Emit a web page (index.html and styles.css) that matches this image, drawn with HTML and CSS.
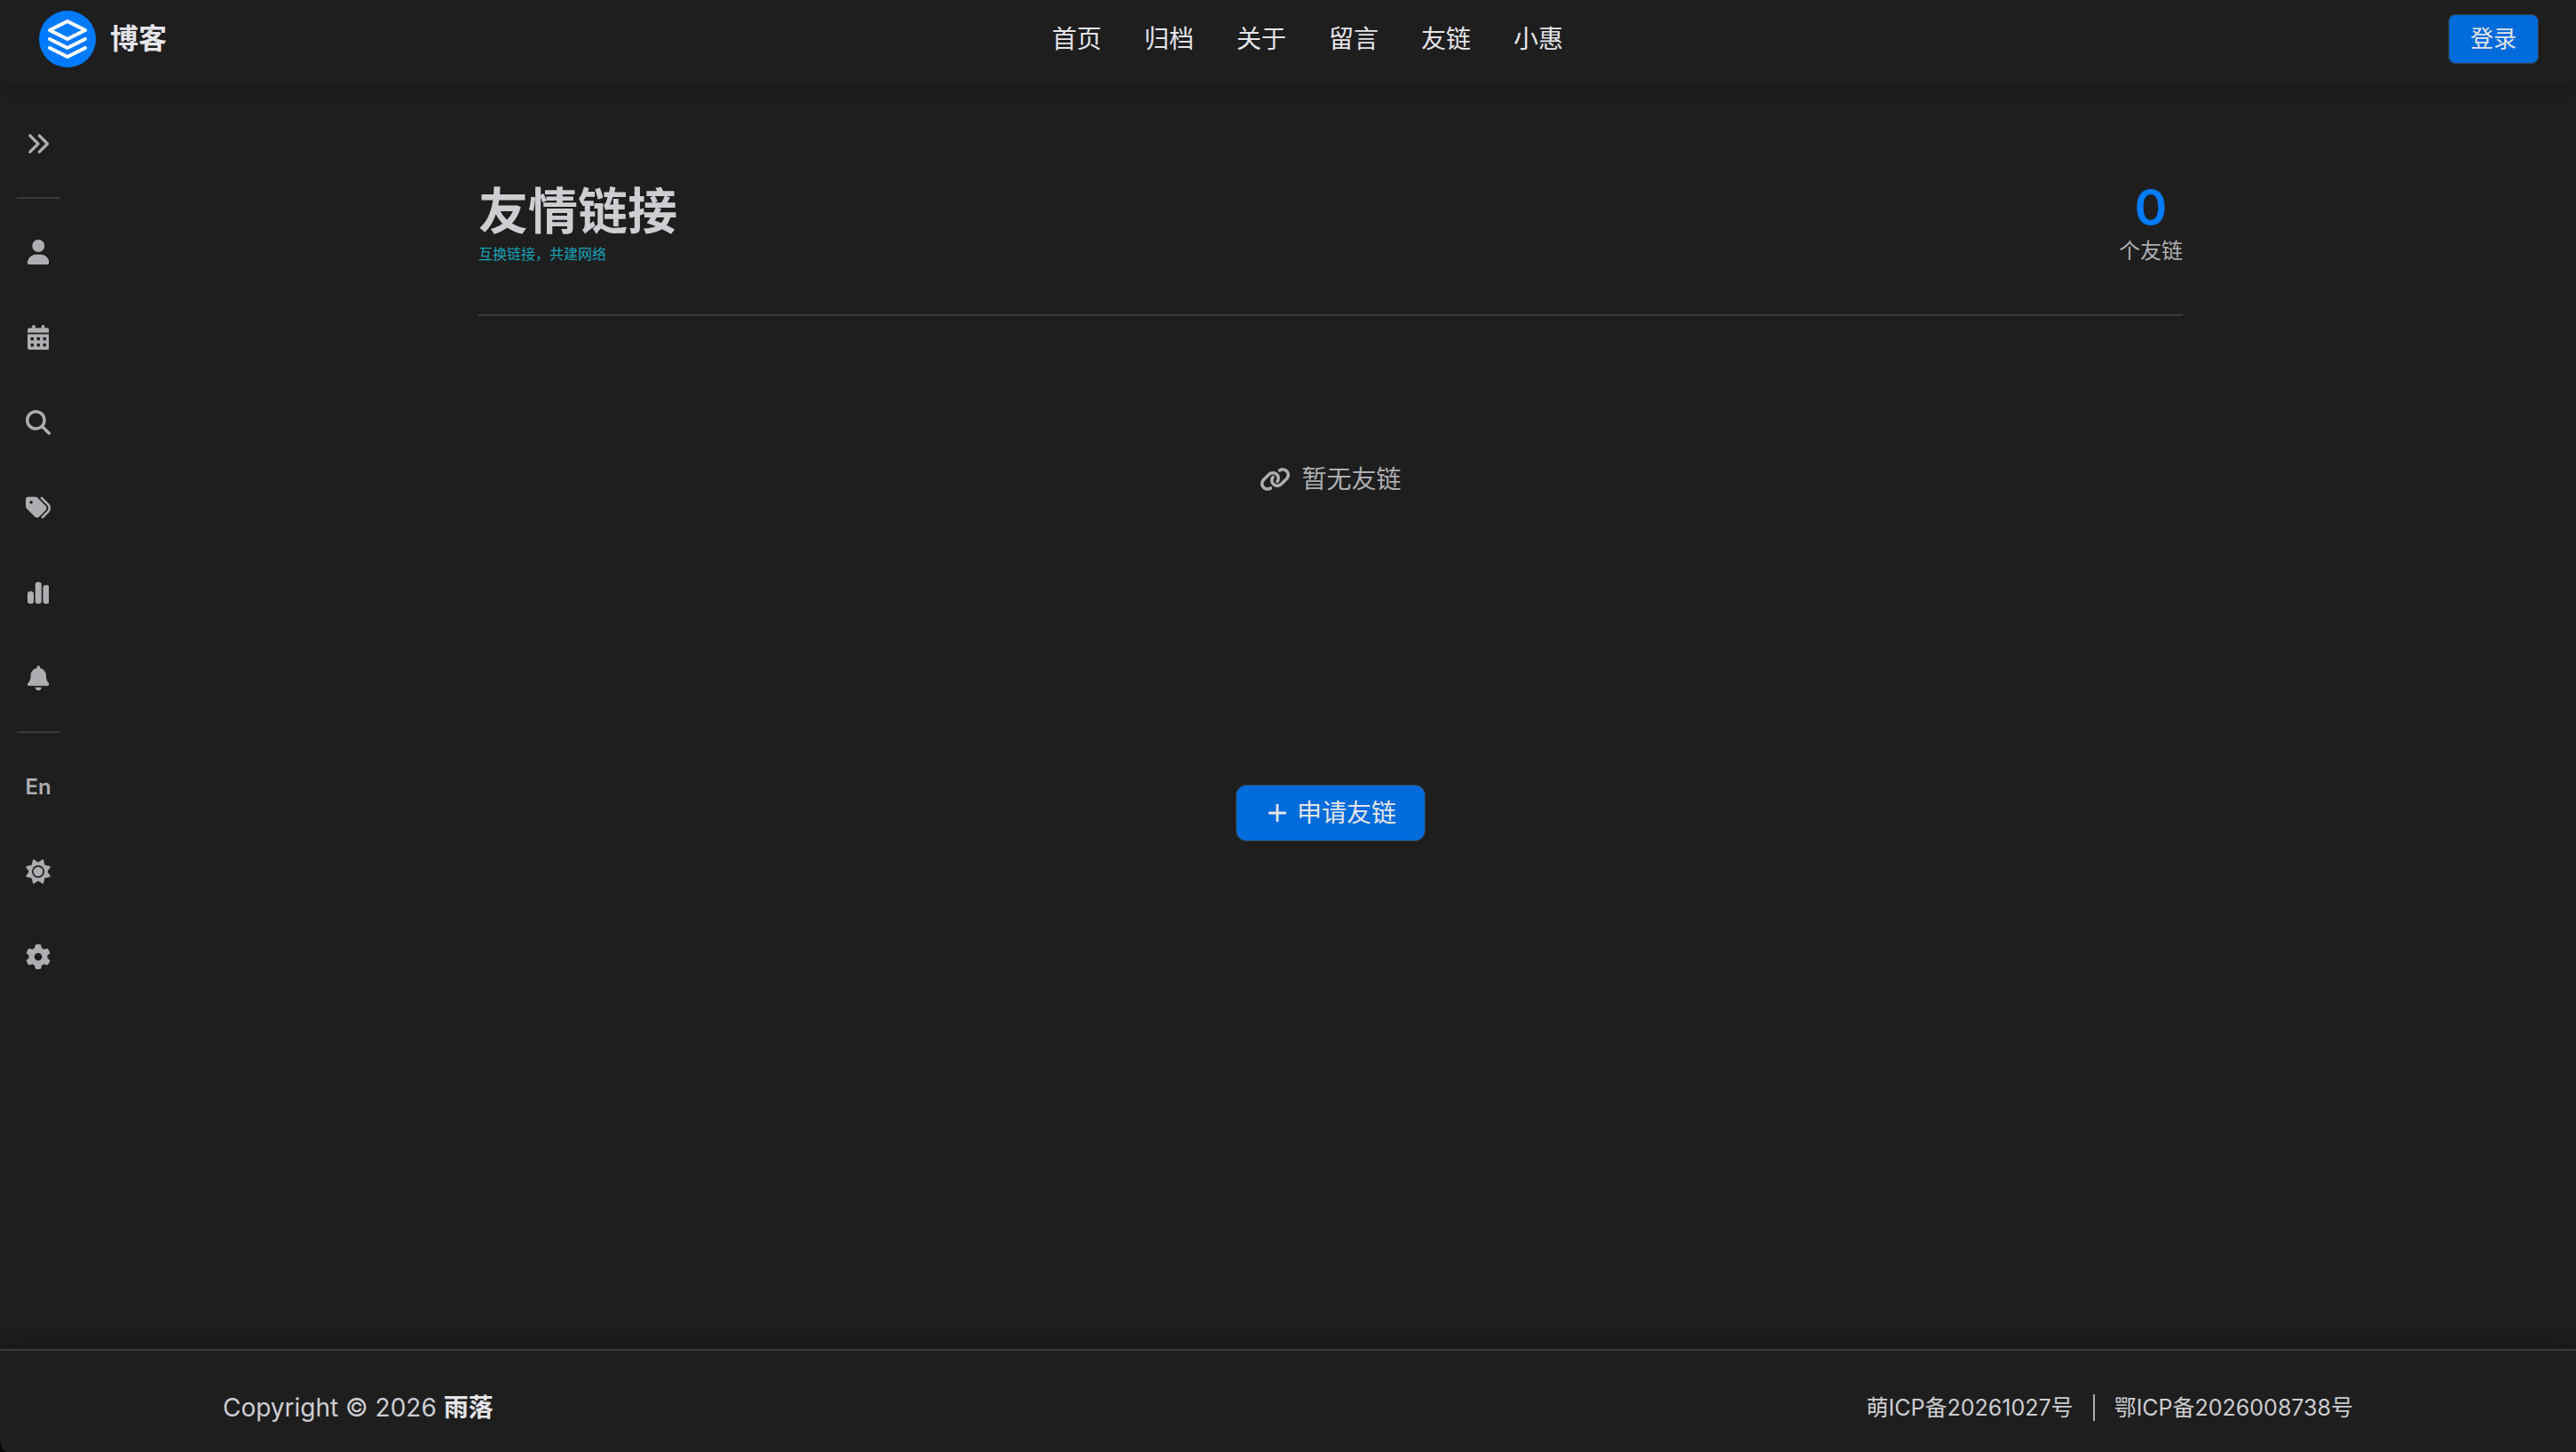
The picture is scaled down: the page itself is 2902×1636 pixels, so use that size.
FILE: index.html
```html
<!DOCTYPE html>
<html lang="zh-CN">
<head>
<meta charset="UTF-8">
<meta name="viewport" content="width=device-width, initial-scale=1.0">
<title>友情链接 - 博客</title>
<link rel="stylesheet" href="styles.css">
</head>
<body>

<header class="navbar">
  <a href="#" class="brand">
    <svg class="brand-logo" viewBox="0 0 64 64" aria-hidden="true">
      <circle cx="32" cy="32" r="32" fill="#007aff"/>
      <g fill="none" stroke="#fff" stroke-width="4" stroke-linecap="round" stroke-linejoin="round">
        <path d="M32 12L52 22L32 32L12 22Z"/>
        <path d="M12 32L32 42L52 32"/>
        <path d="M12 42L32 52L52 42"/>
      </g>
    </svg>
    <span class="brand-name">博客</span>
  </a>
  <nav class="nav-links">
    <a href="#">首页</a>
    <a href="#">归档</a>
    <a href="#">关于</a>
    <a href="#">留言</a>
    <a href="#">友链</a>
    <a href="#">小惠</a>
  </nav>
  <button type="button" class="btn btn-login">登录</button>
</header>

<div class="layout">
  <aside class="sidebar">
    <button type="button" class="side-item" aria-label="展开">
      <svg class="icon" viewBox="0 0 512 512"><path d="M88 88L256 256L88 424M280 88L448 256L280 424" fill="none" stroke="currentColor" stroke-width="60" stroke-linecap="round" stroke-linejoin="round"/></svg>
    </button>
    <hr class="side-divider">
    <button type="button" class="side-item" aria-label="个人">
      <svg class="icon" viewBox="0 0 448 512"><path d="M224 256A128 128 0 1 0 224 0a128 128 0 1 0 0 256zm-45.700 48C79.800 304 0 383.800 0 482.300C0 498.700 13.300 512 29.700 512H418.300c16.400 0 29.700-13.300 29.700-29.700C448 383.800 368.200 304 269.700 304H178.300z"/></svg>
    </button>
    <button type="button" class="side-item" aria-label="日历">
      <svg class="icon" viewBox="0 0 448 512"><path d="M128 0c17.700 0 32 14.300 32 32V64H288V32c0-17.700 14.300-32 32-32s32 14.300 32 32V64h48c26.500 0 48 21.500 48 48v48H0V112C0 85.500 21.500 64 48 64H96V32c0-17.700 14.300-32 32-32zM0 192H448V464c0 26.500-21.500 48-48 48H48c-26.500 0-48-21.500-48-48V192zm64 80v32c0 8.800 7.200 16 16 16h32c8.800 0 16-7.200 16-16V272c0-8.800-7.200-16-16-16H80c-8.800 0-16 7.200-16 16zm128 0v32c0 8.800 7.200 16 16 16h32c8.800 0 16-7.200 16-16V272c0-8.800-7.200-16-16-16H208c-8.800 0-16 7.200-16 16zm144-16c-8.800 0-16 7.200-16 16v32c0 8.800 7.200 16 16 16h32c8.800 0 16-7.200 16-16V272c0-8.800-7.200-16-16-16H336zM64 400v32c0 8.800 7.200 16 16 16h32c8.800 0 16-7.200 16-16V400c0-8.800-7.200-16-16-16H80c-8.800 0-16 7.200-16 16zm144-16c-8.800 0-16 7.200-16 16v32c0 8.800 7.200 16 16 16h32c8.800 0 16-7.200 16-16V400c0-8.800-7.200-16-16-16H208zm112 16v32c0 8.800 7.200 16 16 16h32c8.800 0 16-7.200 16-16V400c0-8.800-7.200-16-16-16H336c-8.800 0-16 7.200-16 16z"/></svg>
    </button>
    <button type="button" class="side-item" aria-label="搜索">
      <svg class="icon" viewBox="0 0 512 512"><path d="M416 208c0 45.900-14.900 88.300-40 122.700L502.600 457.400c12.500 12.500 12.500 32.800 0 45.300s-32.800 12.500-45.300 0L330.700 376c-34.400 25.200-76.800 40-122.700 40C93.100 416 0 322.900 0 208S93.100 0 208 0S416 93.100 416 208zM208 352a144 144 0 1 0 0-288 144 144 0 1 0 0 288z"/></svg>
    </button>
    <button type="button" class="side-item" aria-label="标签">
      <svg class="icon" viewBox="0 0 512 512"><path d="M345 39.100L472.800 168.400c52.400 53 52.400 138.200 0 191.200L360.800 472.900c-9.300 9.400-24.500 9.500-33.900 .2s-9.500-24.500-.2-33.900L438.600 325.900c33.900-34.300 33.900-89.400 0-123.700L310.900 72.900c-9.300-9.400-9.200-24.600 .2-33.900s24.600-9.200 33.900 .2zM0 229.500V80C0 53.500 21.500 32 48 32H197.500c17 0 33.300 6.700 45.300 18.700l168 168c25 25 25 65.500 0 90.500L277.300 442.700c-25 25-65.500 25-90.500 0l-168-168C6.700 262.700 0 246.500 0 229.500zM144 144a32 32 0 1 0 -64 0 32 32 0 1 0 64 0z"/></svg>
    </button>
    <button type="button" class="side-item" aria-label="统计">
      <svg class="icon" viewBox="0 0 448 512">
        <rect x="0" y="224" width="128" height="256" rx="54"/>
        <rect x="160" y="32" width="128" height="448" rx="54"/>
        <rect x="320" y="96" width="128" height="384" rx="54"/>
      </svg>
    </button>
    <button type="button" class="side-item" aria-label="通知">
      <svg class="icon" viewBox="0 0 448 512"><path d="M224 0c-17.700 0-32 14.300-32 32V51.200C119 66 64 130.600 64 208v18.800c0 47-17.300 92.400-48.500 127.600l-7.400 8.300c-8.400 9.400-10.400 22.900-5.300 34.400S19.400 416 32 416H416c12.600 0 24-7.400 29.200-18.900s3.100-25-5.300-34.400l-7.400-8.300C401.300 319.200 384 273.900 384 226.800V208c0-77.400-55-142-128-156.800V32c0-17.700-14.300-32-32-32zm45.300 493.300c12-12 18.700-28.300 18.700-45.300H224 160c0 17 6.700 33.300 18.700 45.300s28.300 18.700 45.300 18.700s33.300-6.700 45.300-18.700z"/></svg>
    </button>
    <hr class="side-divider">
    <button type="button" class="side-item">En</button>
    <button type="button" class="side-item" aria-label="主题">
      <svg class="icon" viewBox="0 0 512 512">
        <path fill-rule="evenodd" stroke="currentColor" stroke-width="16" stroke-linejoin="round" d="M355 8L385 127L504 157L438 256L504 355L385 385L355 504L256 438L157 504L127 385L8 355L74 256L8 157L127 127L157 8L256 74ZM256 392A136 136 0 1 0 256 120A136 136 0 1 0 256 392Z"/>
        <circle cx="256" cy="256" r="98"/>
      </svg>
    </button>
    <button type="button" class="side-item" aria-label="设置">
      <svg class="icon" viewBox="0 0 512 512"><path d="M495.900 166.600c3.200 8.700 .5 18.400-6.400 24.600l-43.300 39.400c1.100 8.300 1.700 16.800 1.700 25.400s-.6 17.100-1.700 25.400l43.300 39.400c6.900 6.200 9.600 15.900 6.400 24.600c-4.400 11.900-9.700 23.300-15.800 34.300l-4.700 8.100c-6.600 11-14 21.400-22.100 31.200c-5.900 7.200-15.700 9.600-24.500 6.800l-55.700-17.700c-13.400 10.300-28.200 18.900-44 25.400l-12.500 57.100c-2 9.100-9 16.300-18.200 17.800c-13.800 2.300-28 3.500-42.500 3.500s-28.700-1.200-42.500-3.500c-9.200-1.500-16.200-8.700-18.200-17.800l-12.500-57.100c-15.800-6.500-30.600-15.100-44-25.400L83.100 425.900c-8.800 2.800-18.600 .3-24.500-6.800c-8.100-9.800-15.500-20.200-22.100-31.200l-4.700-8.100c-6.100-11-11.400-22.400-15.800-34.300c-3.200-8.700-.5-18.400 6.400-24.600l43.300-39.400C64.600 273.100 64 264.600 64 256s.6-17.100 1.700-25.400L22.400 191.200c-6.900-6.200-9.600-15.900-6.400-24.600c4.400-11.900 9.700-23.300 15.800-34.300l4.700-8.100c6.600-11 14-21.400 22.100-31.200c5.900-7.200 15.700-9.600 24.500-6.800l55.700 17.700c13.400-10.300 28.200-18.900 44-25.400l12.500-57.100c2-9.100 9-16.300 18.200-17.800C227.300 1.200 241.500 0 256 0s28.700 1.200 42.500 3.500c9.200 1.500 16.200 8.700 18.200 17.800l12.500 57.100c15.800 6.500 30.600 15.100 44 25.400l55.700-17.700c8.800-2.800 18.600-.3 24.500 6.800c8.100 9.800 15.500 20.200 22.100 31.200l4.700 8.100c6.100 11 11.400 22.400 15.800 34.300zM256 336a80 80 0 1 0 0-160 80 80 0 1 0 0 160z"/></svg>
    </button>
  </aside>

  <main class="content">
    <div class="page-header">
      <div>
        <h1>友情链接</h1>
        <p class="subtitle">互换链接，共建网络</p>
      </div>
      <div class="stats">
        <span class="stats-number">0</span>
        <span class="stats-label">个友链</span>
      </div>
    </div>

    <div class="empty">
      <svg class="icon-wide" viewBox="0 0 640 512" aria-hidden="true"><path d="M579.800 267.700c56.500-56.500 56.500-148 0-204.500c-50-50-128.800-56.500-186.300-15.400l-1.600 1.100c-14.400 10.300-17.700 30.300-7.400 44.600s30.300 17.700 44.600 7.400l1.600-1.100c32.100-22.900 76-19.300 103.800 8.600c31.500 31.500 31.500 82.500 0 114L422.300 334.800c-31.500 31.500-82.500 31.500-114 0c-27.900-27.900-31.500-71.800-8.600-103.800l1.100-1.600c10.300-14.400 6.900-34.400-7.400-44.600s-34.400-6.900-44.600 7.400l-1.100 1.600C206.500 251.200 213 330 263 380c56.500 56.500 148 56.500 204.500 0L579.800 267.700zM60.200 244.300c-56.500 56.500-56.500 148 0 204.500c50 50 128.800 56.500 186.300 15.400l1.600-1.100c14.400-10.300 17.700-30.300 7.400-44.600s-30.300-17.700-44.600-7.400l-1.600 1.100c-32.100 22.900-76 19.300-103.800-8.600C74 372 74 321 105.500 289.500L217.700 177.200c31.500-31.500 82.500-31.500 114 0c27.900 27.900 31.500 71.800 8.600 103.900l-1.100 1.600c-10.300 14.400-6.900 34.400 7.400 44.600s34.400 6.900 44.600-7.400l1.100-1.600C433.500 260.800 427 182 377 132c-56.500-56.500-148-56.500-204.500 0L60.200 244.300z"/></svg>
      <span>暂无友链</span>
    </div>

    <button type="button" class="btn btn-apply">
      <svg class="icon" viewBox="0 0 512 512" aria-hidden="true"><path d="M256 96V416M96 256H416" stroke="currentColor" stroke-width="52" stroke-linecap="round"/></svg>
      申请友链
    </button>
  </main>
</div>

<footer class="footer">
  <div class="footer-inner">
    <p class="copyright">Copyright © 2026 <strong>雨落</strong></p>
    <div class="records">
      <a href="#">萌ICP备20261027号</a>
      <a href="#">鄂ICP备2026008738号</a>
    </div>
  </div>
</footer>

</body>
</html>
```
FILE: styles.css
```css
:root {
  --bg: #1e1e1e;
  --line: #3a3a3c;
  --primary: #007aff;
  --button: #006bdb;
  --text: #e5e5ea;
  --text-soft: #cdcdd2;
  --text-muted: #aeaeb2;
}
* {
  box-sizing: border-box;
}
html {
  background-color: #0a0a0a;
}
body {
  display: flex;
  flex-direction: column;
  min-height: 100vh;
  margin: 0;
  border-bottom-left-radius: 8px 16px;
  background-color: var(--bg);
  color: var(--text);
  font-family: Inter, "Noto Sans CJK SC", sans-serif;
  font-size: 28px;
}
h1, p {
  margin: 0;
}
a {
  color: inherit;
  text-decoration: none;
}
button {
  font: inherit;
  cursor: pointer;
}
svg {
  fill: currentColor;
}
.icon {
  height: 28px;
}
.icon-wide {
  width: 35px;
  height: 28px;
}

/* Top bar */
.navbar {
  display: flex;
  justify-content: space-between;
  align-items: center;
  padding: 12px 42px 18px 44px;
  background-color: var(--bg);
  box-shadow: 0 2px 16px rgba(0, 0, 0, 0.2);
}
.brand {
  display: flex;
  align-items: center;
  gap: 16px;
}
.brand-logo {
  width: 64px;
  height: 64px;
}
.brand-name {
  font-size: 32px;
  font-weight: 700;
  line-height: 48px;
}
.nav-links {
  display: flex;
  gap: 48px;
  line-height: 48px;
}
.btn {
  border: 1px solid var(--line);
  background-color: var(--button);
  color: var(--text);
}
.btn-login {
  padding: 8px 24px;
  border-radius: 8px;
  font-size: 26px;
  line-height: 38px;
}

/* Sidebar */
.layout {
  display: flex;
  flex: 1;
}
.sidebar {
  display: flex;
  flex-direction: column;
  align-items: center;
  width: 96px;
  padding: 20px 10px 0 0;
}
.side-item {
  display: flex;
  justify-content: center;
  align-items: center;
  width: 100%;
  height: 96px;
  padding: 0;
  border: none;
  background: none;
  color: var(--text-muted);
  font-size: 24px;
  font-weight: 600;
}
.side-divider {
  width: 48px;
  height: 2px;
  margin: 12px 0;
  border: none;
  background-color: var(--line);
}

/* Friend links page */
.content {
  display: flex;
  flex: 1;
  flex-direction: column;
  align-items: center;
  padding: 112px 40px;
}
.page-header {
  display: flex;
  justify-content: space-between;
  width: 100%;
  max-width: 1920px;
  padding-bottom: 50px;
  border-bottom: 2px solid var(--line);
}
h1 {
  color: var(--text-soft);
  font-size: 56px;
  font-weight: 700;
  line-height: 64px;
}
.subtitle {
  color: #17a2b8;
  font-size: 16px;
  line-height: 32px;
}
.stats {
  display: flex;
  flex-direction: column;
  align-items: center;
}
.stats-number {
  color: var(--primary);
  font-size: 56px;
  font-weight: 600;
  line-height: 56px;
}
.stats-label {
  color: var(--text-muted);
  font-size: 24px;
  line-height: 42px;
}
.empty {
  display: flex;
  align-items: center;
  gap: 12px;
  padding: 160px 0;
  color: var(--text-muted);
  line-height: 48px;
}
.btn-apply {
  display: flex;
  align-items: center;
  gap: 8px;
  margin-top: 160px;
  padding: 8px 32px;
  border-radius: 12px;
  line-height: 46px;
}

/* Footer */
.footer {
  padding: 40px 0 26px;
  border-top: 2px solid var(--line);
  box-shadow: 0 -4px 20px rgba(0, 0, 0, 0.3);
}
.footer-inner {
  display: flex;
  justify-content: space-between;
  align-items: center;
  max-width: 2400px;
  margin: 0 auto;
  color: var(--text-soft);
  line-height: 48px;
}
.copyright strong {
  color: var(--text);
}
.records {
  display: flex;
  align-items: center;
  font-size: 25px;
  line-height: 30px;
}
.records a + a {
  margin-left: 22px;
  padding-left: 22px;
  border-left: 2px solid var(--text-muted);
}
```
